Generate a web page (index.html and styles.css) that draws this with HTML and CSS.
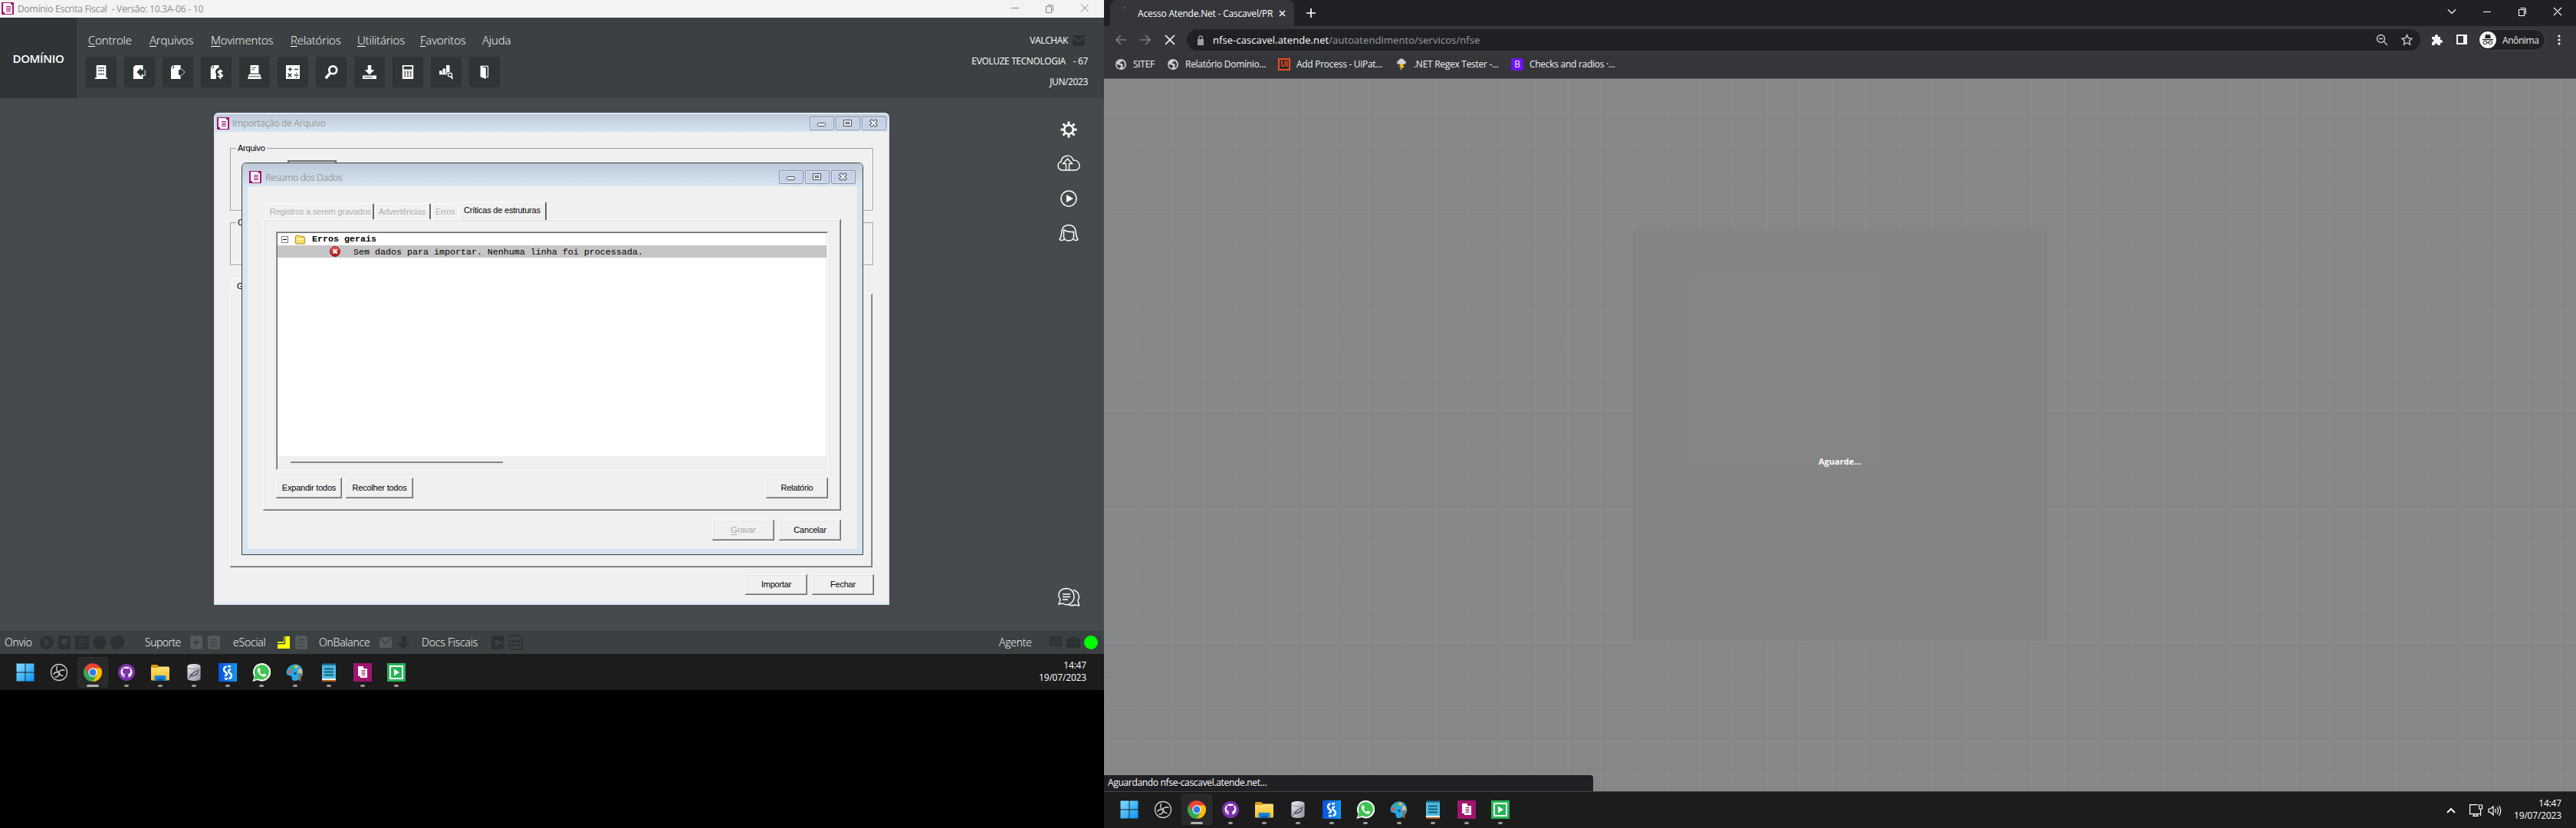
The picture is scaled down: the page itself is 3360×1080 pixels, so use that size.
FILE: index.html
```html
<!DOCTYPE html>
<html lang="pt-BR">
<head>
<meta charset="utf-8">
<title>Domínio Escrita Fiscal</title>
<link rel="stylesheet" href="styles.css">
</head>
<body>
<svg class="defs" width="0" height="0">
  <defs>
    <linearGradient id="gWin" x1="0" y1="0" x2="1" y2="1"><stop offset="0" stop-color="#84e0ff"/><stop offset="1" stop-color="#0a93f5"/></linearGradient>
    <linearGradient id="gFold" x1="0" y1="0" x2="0" y2="1"><stop offset="0" stop-color="#ffe07a"/><stop offset="1" stop-color="#fcbd1f"/></linearGradient>
    <linearGradient id="gDb" x1="0" y1="0" x2="1" y2="1"><stop offset="0" stop-color="#f0f1f6"/><stop offset=".6" stop-color="#b4b7c2"/><stop offset="1" stop-color="#8f92a0"/></linearGradient>
    <linearGradient id="gBlue" x1="0" y1="0" x2="1" y2="0"><stop offset="0" stop-color="#0a50dc"/><stop offset="1" stop-color="#1597ee"/></linearGradient>
    <linearGradient id="gErr" x1="0" y1="0" x2="0" y2="1"><stop offset="0" stop-color="#ef6a62"/><stop offset="1" stop-color="#a60a10"/></linearGradient>
  </defs>
  <symbol id="doc" viewBox="0 0 16 16"><path fill="#a0146e" d="M0 0h16v16H0z"/><path fill="#fff" d="M2 1h10v2h2v12H4v-2H2z"/><path stroke="#a0146e" d="M6 5.500h6M6 7.500h6M6 9.500h6M6 11.500h6"/></symbol>
  <symbol id="win" viewBox="0 0 24 24"><path fill="url(#gWin)" d="M.5.5h11v11H.5zM12.500.5h11v11h-11zM.5 12.500h11v11H.5zM12.500 12.500h11v11h-11z"/></symbol>
  <symbol id="obs" viewBox="0 0 24 24"><circle cx="12" cy="12" r="10.500" fill="#19191b" stroke="#c9c9c9" stroke-width="1.300"/><path fill="none" stroke="#c4c4c4" stroke-width="1.600" d="M9.500 4c-1.500 4 0 7 2.500 8M19.500 9.500c-4-1.500-7 0-7.500 2.500M6.500 18c4.500.5 6-2.500 5.500-6M12 12c1 3.500 3.500 4.500 5.500 4.500M12 12c-3-1-6 .5-7.500 2.500"/></symbol>
  <symbol id="chrome" viewBox="0 0 24 24"><path fill="#fbbc04" d="M22.400 6A12 12 0 0 1 12 24l3.500-9L12 6z"/><path fill="#34a853" d="M1.600 6A12 12 0 0 0 12 24l5-8.500L7 15z"/><path fill="#ea4335" d="M1.600 6A12 12 0 0 1 22.400 6.500H12l-5 8.500z"/><circle cx="12" cy="12" r="5.700" fill="#fff"/><circle cx="12" cy="12" r="4.500" fill="#2b7de9"/></symbol>
  <symbol id="hub" viewBox="0 0 24 24"><circle cx="12" cy="12" r="11" fill="#7d32ab"/><path fill="#fff" d="M12 4.500c-4.300 0-7.500 3.200-7.500 7.300 0 3.300 2 6 5 7v-2.300c-2 .3-2.500-.8-3-1.700l1.500.2c.5.8 1 .9 1.700.7.100-.6.300-.9.600-1.200-2.500-.4-3.500-1.700-3.500-3.700 0-1 .3-1.700.8-2.300-.2-.8-.1-1.600.2-2.200.9 0 1.600.4 2.200.9a8 8 0 0 1 4 0c.6-.5 1.300-.9 2.200-.9.300.6.400 1.400.2 2.200.5.600.8 1.300.8 2.300 0 2-1 3.300-3.500 3.700.5.500.8 1.100.8 2v2.300c3-1 5-3.700 5-7 0-4.100-3.200-7.300-7.500-7.300z"/></symbol>
  <symbol id="folder" viewBox="0 0 24 24"><path fill="#d99a12" d="M0 3.500Q0 2 1.500 2H8l2.500 2.500V8H0z"/><path fill="url(#gFold)" d="M0 6h9l2-1.500h11.500Q24 4.500 24 6v15.500q0 1-1 1H1q-1 0-1-1z"/><path fill="#1783d8" d="M4.500 23v-5.500q0-1.500 1.500-1.500h12q1.500 0 1.500 1.500V23z"/><path fill="#0b5fa8" d="M8 23v-3h8v3z"/></symbol>
  <symbol id="db" viewBox="0 0 24 24"><path fill="url(#gDb)" d="M3.500 4C3.500 0 20.500 0 20.500 4v16c0 4-17 4-17 0z"/><path fill="none" stroke="#8c8f9c" d="M3.500 5.500c1 3 16 3 17 0M3.500 13c1 3 16 3 17 0"/><path fill="none" stroke="#4b4d57" stroke-width="1.300" d="M5 20c3-5 7-9 13-11-1 5-5 8-10 8"/></symbol>
  <symbol id="dollar" viewBox="0 0 24 24"><path fill="url(#gBlue)" d="M0 0h24v24H0z"/><path fill="none" stroke="#fff" stroke-width="2.400" d="M10.500 4.500c-4 .5-4.500 5-1.500 7s2.500 4-1 5M13.500 20c4-.5 4.500-5 1.500-7s-2.500-4 1-5"/><path fill="#fff" d="M12 3h4v2.400h-4zM8 19h4v2.400H8z"/></symbol>
  <symbol id="zap" viewBox="0 0 24 24"><path fill="#fff" d="M12.500 0A11.700 11.700 0 0 0 2.500 17.500L.5 24l6.500-2A11.700 11.700 0 1 0 12.500 0z"/><circle cx="12.400" cy="11.700" r="9.700" fill="#3fc351"/><path fill="#3fc351" d="M3.500 16l-1.300 5.800 6-1.500z"/><path fill="#fff" d="M8.500 6c-3 2-1.500 6.500 2 9.500s7 3 7.800 0c0-.8-2.500-2-3.300-1.700l-1.300 1.300c-2-.7-3.500-2.200-4-3.800l1.100-1.500C10.700 8.500 9.900 6 8.500 6z"/></symbol>
  <symbol id="paint" viewBox="0 0 24 24"><path fill="#2aa7e8" d="M11 1.500C4 2.500-.5 9 1 14c1.200 3 4.500 1.500 6 3s-.5 5.500 4 6c7 .3 12-6.500 11-12.500S17 .7 11 1.500z"/><circle cx="7.500" cy="6.500" r="2.200" fill="#3fae49"/><circle cx="13.500" cy="4.800" r="2.200" fill="#f6b91c"/><circle cx="4.500" cy="11.500" r="2.200" fill="#e8543f"/><circle cx="12" cy="13.500" r="1.700" fill="#134a74"/><path fill="#e9b97a" d="M16 7.500h4.500v6H16z"/><path fill="#b0611c" d="M17 13h2.500v9q-1.200 3-2.500 0z"/></symbol>
  <symbol id="note" viewBox="0 0 24 24"><path fill="#54bde0" d="M3 2h18v19H3z"/><path fill="#f4f4f4" d="M3 20h18v2H3z"/><path fill="#b05a1e" d="M3 22h18v2H3z"/><path stroke="#0d5a80" stroke-width="1.800" d="M6 7.500h12M6 11.500h12M6 15.500h12"/><path stroke="#1c86b8" stroke-width="1.500" d="M5 0v4M8 0v4M11 0v4M14 0v4M17 0v4M20 0v4"/></symbol>
  <symbol id="dom" viewBox="0 0 24 24"><path fill="#a0146e" d="M0 0h24v24H0z"/><path fill="#fff" d="M6 4h7v3h5v12H9v-2H6z"/><path stroke="#a0146e" stroke-width="1" d="M10.500 9.500h5M10.500 11.500h5M10.500 13.500h5M10.500 15.500h5"/></symbol>
  <symbol id="play" viewBox="0 0 24 24"><path fill="#24b455" d="M0 0h24v24H0z"/><path fill="none" stroke="#fff" stroke-width="2" d="M4 4h16v16H4z"/><path fill="#fff" d="M9 7.500l7 4.500-7 4.500z"/></symbol>
  <symbol id="globe" viewBox="0 0 14 14"><circle cx="7" cy="7" r="7" fill="#c9cbce"/><path fill="#35363a" d="M1.500 7l3 .5 2.500 1v1.500l-1 1-.5 1.500C3 11.500 1.500 9.500 1.500 7zM7 1.500l2 .5-.5 1.500-2 .5-1 1.500 3 .5 1.500 2-1 2.500 2 .5c2.500-4 .5-8-3-9z"/></symbol>
  <symbol id="cmin" viewBox="0 0 32 18"><rect x="10.500" y="8.500" width="10" height="4" rx="1" fill="#f4f4f4" stroke="#4c5064"/></symbol>
  <symbol id="cmax" viewBox="0 0 32 18"><rect x="10.500" y="4.500" width="10" height="8" rx=".5" fill="#eee" stroke="#4c5064"/><rect x="13.500" y="7.500" width="4" height="2" fill="#c5d3e3" stroke="#4c5064"/></symbol>
  <symbol id="ccls" viewBox="0 0 32 18"><path stroke="#4c5064" stroke-width="4.400" d="M11.500 4.500l8 8M19.500 4.500l-8 8"/><path stroke="#f4f4f4" stroke-width="2.400" d="M12.200 5.200l6.600 6.600M18.800 5.200l-6.600 6.600"/></symbol>
</svg>

<main class="screens">
<section class="left">
  <header class="app-title">
    <svg width="16" height="16"><use href="#doc"/></svg>
    <span class="app-name">Domínio Escrita Fiscal&nbsp; - Versão: 10.3A-06 - 10</span>
    <svg class="wctl" width="102" height="16" fill="none" stroke="#858585"><path d="M1 7.500h10M46.500 5.500h7v8h-7zM48.500 3.500h5q2 0 2 2v6M92 2.500l10 10M102 2.500l-10 10"/></svg>
  </header>
  <header class="app-head">
    <div class="brand">DOMÍNIO</div>
    <div class="head-mid">
      <nav class="menu"><span><u>C</u>ontrole</span><span><u>A</u>rquivos</span><span><u>M</u>ovimentos</span><span><u>R</u>elatórios</span><span><u>U</u>tilitários</span><span><u>F</u>avoritos</span><span>Ajuda</span></nav>
      <div class="tools">
        <i><svg viewBox="0 0 20 20"><path fill="#fff" d="M3 0h14v18h2v2H1v-2h2z"/><path fill="#2f3437" d="M6 3h2v2H6zM9 3h2v2H9zM12 3h2v2h-2zM6 7h2v2H6zM9 7h2v2H9zM12 7h2v2h-2zM6 12h2v2H6zM9 12h2v2H9zM12 12h2v2h-2z"/></svg></i>
        <i><svg viewBox="0 0 20 20"><path fill="#fff" d="M1 3l3-3h11v20H1z"/><path fill="#2f3437" d="M6 10l6-6v3h6v6h-5v4z"/><path fill="none" stroke="#fff" d="M14 15h4V7M2 3h2V1"/></svg></i>
        <i><svg viewBox="0 0 20 20"><path fill="#fff" d="M0 3l3-3h11v6l-3 1v7l3 1v5H0z"/><path fill="none" stroke="#ddd" d="M15 5l5 5-5 5"/><path fill="none" stroke="#2f3437" d="M4 0v4H1"/></svg></i>
        <i><svg viewBox="0 0 20 20"><path fill="#fff" d="M2 3l3-3h9v4c-5 1-6 5-4 9v7H2z"/><path fill="none" stroke="#2f3437" d="M6 0v4H3"/><path fill="none" stroke="#fff" stroke-width="2" d="M19 9.500c-2-2-6-1.500-6 .8 0 2.700 6 2 6 4.700 0 2.300-4.500 2.800-6.500.5M16 6v14"/></svg></i>
        <i><svg viewBox="0 0 20 20"><path fill="#fff" d="M4 0h12v12H4zM2 13h16l2 7H0z"/><path stroke="#2f3437" d="M6 3.500h6M6 6.500h4M2 16.500h16"/></svg></i>
        <i><svg viewBox="0 0 20 20"><path fill="#fff" d="M0 0h20v20H0z"/><path stroke="#2f3437" stroke-width="1.600" d="M3 6h6M6 3v6M12 6h6M3 12l5 5M8 12l-5 5M12 14.500h6M14.500 11.500h1.500M14.500 17.500h1.500"/></svg></i>
        <i><svg viewBox="0 0 20 20"><circle cx="12.500" cy="7" r="5.500" fill="none" stroke="#fff" stroke-width="3"/><path stroke="#fff" stroke-width="4" d="M8 12l-6 7"/></svg></i>
        <i><svg viewBox="0 0 20 20"><path fill="#fff" d="M7.500 0h5v7H17l-7 7-7-7h4.500zM0 15h20v5H0z"/><path stroke="#2f3437" d="M2 17.500h12"/></svg></i>
        <i><svg viewBox="0 0 20 20"><path fill="#fff" d="M2 0h16v20H2z"/><path fill="#2f3437" d="M4 2h12v4H4zM5 9h2v2H5zM9 9h2v2H9zM13 9h2v2h-2zM5 12h2v2H5zM9 12h2v2H9zM13 12h2v2h-2zM5 15h2v2H5zM9 15h2v2H9zM13 15h2v2h-2z"/></svg></i>
        <i><svg viewBox="0 0 20 20"><path fill="#fff" d="M0 8h4v5H0zM5 5h4v8H5zM10 0h5v10h-3l-1 3h-1zM0 12h10v1.500H0z"/><circle cx="15.500" cy="14" r="2.800" fill="none" stroke="#fff" stroke-width="1.500"/><path stroke="#fff" stroke-width="2" d="M17 16l2.500 4"/></svg></i>
        <i><svg viewBox="0 0 20 20"><path fill="#fff" d="M4 2l8 2v16l-8-3z"/><path fill="none" stroke="#fff" stroke-width="1.200" d="M4 1.500h11V17h-3"/></svg></i>
      </div>
    </div>
    <div class="who">
      <div>VALCHAK<svg width="16" height="14"><path fill="#2a2f31" d="M0 0h16v14H0z"/><path fill="none" stroke="#444a4c" stroke-width="1.500" d="M0 2l8 6 8-6"/></svg></div>
      <div>EVOLUZE TECNOLOGIA<b>- 67</b></div>
      <div>JUN/2023</div>
    </div>
  </header>

  <div class="desk">
    <div class="side">
      <svg width="22" height="22" viewBox="-11 -11 22 22"><circle r="5.800" fill="none" stroke="#fff" stroke-width="2.600"/><path stroke="#fff" stroke-width="3" d="M0-7v-3.500M0 7v3.500M-7 0h-3.500M7 0h3.500M5-5l2.500-2.500M-5-5l-2.500-2.500M5 5l2.500 2.500M-5 5l-2.500 2.500"/></svg>
      <svg width="30" height="22" viewBox="0 0 30 22" fill="none" stroke="#fff" stroke-width="1.400"><path d="M11 20H7C-.5 19.500-.5 10 5 9 6 0 18-2 21 7c9-1 11 12 3 13h-8"/><path d="M11.500 20v-8.500H7.500l6-6.500 6 6.500h-4V20z"/></svg>
      <svg class="vid" width="22" height="22" viewBox="0 0 22 22"><circle cx="11" cy="11" r="10" fill="none" stroke="#fff" stroke-width="1.500"/><path fill="#fff" d="M8 6l9 5-9 5z"/></svg>
      <svg width="26" height="24" viewBox="0 0 26 24" fill="none" stroke="#fff" stroke-width="1.500"><path d="M7 20c-2 2-5 2-6 0 3-3 2-6 3-11C5-1 21-1 22 9c1 5 0 8 3 11-1 2-4 2-6 0"/><path d="M6.500 8v9c1 6.500 12 6.500 13 0v-6.500c-5 .5-9-.5-13-2.500z"/></svg>
      <svg class="chat" width="30" height="26" viewBox="0 0 30 26" fill="none" stroke="#fff" stroke-width="1.400"><path d="M4 16l-2 6 5-1c8 5 15-2 15-9S17 1.500 12 1.500C2 2 0 10 4 16zM21 3.500c7 2 9 9 6 14l1.500 6.500-6-1c-2 1-5 1-8-.5"/><path d="M7 9h10M7 12.500h10M7 16h7"/></svg>
    </div>

    <div class="dlg outer">
      <div class="dlg-title"><svg width="16" height="16"><use href="#doc"/></svg><span>Importação de Arquivo</span>
        <div class="btns"><b><svg><use href="#cmin"/></svg></b><b><svg><use href="#cmax"/></svg></b><b><svg><use href="#ccls"/></svg></b></div></div>
      <div class="outer-body">
        <fieldset class="fs1"><legend>Arquivo</legend><div class="combo"></div></fieldset>
        <fieldset class="fs2"><legend>Competência</legend></fieldset>
        <div class="gtab">Geral</div>
        <div class="gpanel"></div>
        <div class="foot"><span class="btn">Importar</span><span class="btn">Fechar</span></div>
      </div>
    </div>

    <div class="dlg inner">
      <div class="dlg-title"><svg width="16" height="16"><use href="#doc"/></svg><span>Resumo dos Dados</span>
        <div class="btns"><b><svg><use href="#cmin"/></svg></b><b><svg><use href="#cmax"/></svg></b><b><svg><use href="#ccls"/></svg></b></div></div>
      <div class="inner-body">
        <div class="tabs"><span class="t1">Registros a serem gravados</span><span class="t2">Advertências</span><span class="t3">Erros</span><span class="on">Críticas de estruturas</span></div>
        <div class="panel">
          <div class="tree">
            <div class="row"><i class="minus"></i><svg width="15" height="13" viewBox="0 0 15 13"><path fill="#f6dd6c" stroke="#b38a1c" d="M1.500 11.500v-9l1-1.500h4l1 1.500h5V4l1.500.5-1 7.500H2z"/><path fill="#fdf3a8" d="M3 5h10l-1 2H3z"/></svg><strong>Erros gerais</strong></div>
            <div class="row sel"><svg width="14" height="14" viewBox="0 0 14 14"><circle cx="7" cy="7" r="6.500" fill="url(#gErr)" stroke="#96161a"/><path stroke="#fff" stroke-width="2.200" d="M4.500 4.500l5 5M9.500 4.500l-5 5"/></svg><span>Sem dados para importar. Nenhuma linha foi processada.</span></div>
            <div class="hbar"><i></i></div>
          </div>
          <div class="acts"><span class="btn w86">Expandir todos</span><span class="btn w88">Recolher todos</span><span class="btn push">Relatório</span></div>
        </div>
        <div class="foot2"><span class="btn off"><u>G</u>ravar</span><span class="btn">Cancelar</span></div>
      </div>
    </div>
  </div>

  <footer class="status">
    <span class="s1">Onvio</span>
    <svg width="112" height="20" fill="#2b3032"><circle cx="9" cy="10" r="9"/><path fill="#3b4042" d="M6 5l8 5-8 5z"/><rect x="24" y="1" width="16" height="18" rx="3"/><path fill="#3b4042" d="M28 5h8v7h-2l-2 3-2-3h-2z"/><rect x="46" y="1" width="18" height="18"/><path stroke="#3b4042" d="M50 5.500h10M50 9.500h10M50 13.500h10"/><circle cx="78" cy="10" r="9"/><circle cx="101" cy="10" r="9"/></svg>
    <span class="s2">Suporte</span>
    <svg width="40" height="20" fill="#55595b"><rect x="0" y="1" width="16" height="18" rx="3"/><path stroke="#3b4042" stroke-width="2" d="M4 10h8M8 6v8"/><rect x="23" y="1" width="16" height="18" rx="3"/><path stroke="#3b4042" d="M26 5.500h9M26 8.500h9M26 11.500h9M26 14.500h9"/></svg>
    <span class="s3">eSocial</span>
    <svg width="41" height="20"><path fill="#ff0" d="M9 2h8v16H1V9h8z"/><path fill="none" stroke="#3b4042" stroke-width="1.300" d="M1 11.500h9.500V2"/><rect x="24" y="1" width="16" height="18" rx="3" fill="#55595b"/><path stroke="#3b4042" d="M28 6.500h8M28 10.500h8M28 14.500h8"/></svg>
    <span class="s4">OnBalance</span>
    <svg width="42" height="20"><path fill="#55595b" d="M0 3h16v14H0z"/><path fill="none" stroke="#3b4042" stroke-width="1.500" d="M0 4l8 7 8-7"/><path fill="#2b3032" d="M28 2h7v9h4l-8 8-8-8h5z"/></svg>
    <span class="s5">Docs Fiscais</span>
    <svg width="42" height="20"><rect y="1" width="16" height="18" rx="3" fill="#2b3032"/><path fill="#3b4042" d="M3 10l5-5v3h6v4H8v3z"/><path fill="none" stroke="#2b3032" stroke-width="1.300" d="M24 6V1h13l3 4v14H26l-2-2"/><path stroke="#2b3032" stroke-width="3" stroke-dasharray="3 1" d="M22 8.500h16M22 13.500h16"/></svg>
    <span class="s6">Agente</span>
    <svg width="64" height="20"><rect x="0" y="2" width="16" height="13" rx="3" fill="#2b3032"/><path fill="#2b3032" d="M11 14h4v4z"/><path fill="none" stroke="#3b4042" d="M3.500 5.500h9v7h-9z"/><circle cx="6" cy="9" r="1.300" fill="#3b4042"/><circle cx="10.500" cy="9" r="1.300" fill="#3b4042"/><path fill="#2b3032" d="M22 5h6V2.500h6V5h6v12H22z"/><path fill="#3b4042" d="M29.500 4h3v1h-3zM22 10.500h7.500v1H22zM32.500 10.500H40v1h-7.500z"/><circle cx="54" cy="10" r="9" fill="#0f0"/></svg>
  </footer>

  <div class="taskbar">
    <div class="apps">
      <i class="bare"><svg><use href="#win"/></svg></i><i class="bare"><svg><use href="#obs"/></svg></i><i class="act"><svg><use href="#chrome"/></svg></i><i><svg><use href="#hub"/></svg></i><i><svg><use href="#folder"/></svg></i><i><svg><use href="#db"/></svg></i><i><svg><use href="#dollar"/></svg></i><i><svg><use href="#zap"/></svg></i><i><svg><use href="#paint"/></svg></i><i><svg><use href="#note"/></svg></i><i><svg><use href="#dom"/></svg></i><i><svg><use href="#play"/></svg></i>
    </div>
    <div class="clock"><span>14:47</span><span>19/07/2023</span></div>
  </div>
</section>

<section class="right">
  <div class="strip">
    <div class="ctab"><i class="spin"></i><span>Acesso Atende.Net - Cascavel/PR</span><svg width="9" height="9"><path stroke="#fff" stroke-width="1.500" d="M1 1l7 7M8 1L1 8"/></svg></div>
    <svg class="plus" width="12" height="12"><path stroke="#fff" stroke-width="1.700" d="M6 0v12M0 6h12"/></svg>
    <svg class="wins" width="150" height="14" fill="none" stroke="#fff" stroke-width="1.100"><path d="M1 4.500l5 5 5-5M47 7.500h10M93.500 4.500h7v8h-7zM95.500 2.500h5q2 0 2 2v6M139 2l10 10M149 2l-10 10"/></svg>
  </div>
  <div class="bar">
    <svg class="nav" width="80" height="16" fill="none" stroke-width="1.700"><path stroke="#7d7f83" d="M15 8H2M8 2L2 8l6 6M33 8h13M40 2l6 6-6 6"/><path stroke="#f1f1f1" d="M66 2l12 12M78 2L66 14"/></svg>
    <div class="omni">
      <svg width="10" height="13"><path fill="#9aa0a6" d="M1 5h8v8H1z"/><path fill="none" stroke="#9aa0a6" stroke-width="1.400" d="M2.700 5V3q0-2 2.300-2t2.300 2v2"/></svg>
      <span class="url"><b>nfse-cascavel.atende.net</b>/autoatendimento/servicos/nfse</span>
      <svg class="oico" width="48" height="16" fill="none" stroke="#c4c6c9" stroke-width="1.400"><circle cx="6.500" cy="6.500" r="5"/><path d="M10 10l5 5M4 6.500h5"/><path d="M40.500 1.500l1.900 4.300 4.600.5-3.400 3.200.9 4.500-4-2.300-4 2.300.9-4.500L34 6.300l4.600-.5z"/></svg>
    </div>
    <svg class="ext" width="48" height="16" fill="#f1f3f4"><path d="M1 4h4c-1-4 5-4 4 0h3v4c4-1 4 5 0 4v3H8.500c0-3-4-3-4 0H1v-4c3 0 3-4 0-4z"/><path fill="none" stroke="#f1f3f4" stroke-width="2" d="M34 2h12v11H34z"/><path d="M42 2h5v12h-5z"/></svg>
    <div class="anon"><svg width="22" height="22"><circle cx="11" cy="11" r="11" fill="#f1f3f4"/><path fill="#202124" d="M7 9l1.200-5h1.600l1.200.6 1.200-.6h1.600L15 9zM4 10h14v1.200H4z"/><path fill="none" stroke="#202124" stroke-width="1.100" d="M9.500 14.500h3"/><circle cx="7.500" cy="14.500" r="2.200" fill="none" stroke="#202124"/><circle cx="14.500" cy="14.500" r="2.200" fill="none" stroke="#202124"/></svg><span>Anônima</span></div>
    <svg class="kebab" width="4" height="14" fill="#f1f3f4"><circle cx="2" cy="2" r="1.600"/><circle cx="2" cy="7" r="1.600"/><circle cx="2" cy="12" r="1.600"/></svg>
  </div>
  <div class="marks">
    <span class="m1"><svg width="14" height="14"><use href="#globe"/></svg>SITEF</span>
    <span class="m2"><svg width="14" height="14"><use href="#globe"/></svg>Relatório Domínio...</span>
    <span class="m3"><b class="ui">Ui</b>Add Process - UiPat...</span>
    <span class="m4"><svg width="14" height="16"><rect x="1" y="3" width="12" height="5" rx="2.500" fill="#b9bdc3"/><circle cx="7" cy="4" r="3.600" fill="#cfd3d8"/><path fill="#f9c31c" d="M6 7h4L8.500 10H11l-6 6 1.500-4.500H4z"/></svg>.NET Regex Tester -...</span>
    <span class="m5"><b class="bs">B</b>Checks and radios ·...</span>
  </div>
  <div class="page">
    <div class="load"><div class="shade"></div><span class="wait">Aguarde...</span></div>
    <div class="bubble">Aguardando nfse-cascavel.atende.net...</div>
  </div>
  <div class="taskbar tb2">
    <div class="apps">
      <i class="bare"><svg><use href="#win"/></svg></i><i class="bare"><svg><use href="#obs"/></svg></i><i class="act"><svg><use href="#chrome"/></svg></i><i><svg><use href="#hub"/></svg></i><i><svg><use href="#folder"/></svg></i><i><svg><use href="#db"/></svg></i><i><svg><use href="#dollar"/></svg></i><i><svg><use href="#zap"/></svg></i><i><svg><use href="#paint"/></svg></i><i><svg><use href="#note"/></svg></i><i><svg><use href="#dom"/></svg></i><i><svg><use href="#play"/></svg></i>
    </div>
    <svg class="tray" width="72" height="18" fill="none" stroke="#fff" stroke-width="1.200"><path stroke-width="1.800" d="M1 12l5-5 5 5"/><path d="M41 1.600H30.600v12H44M34 16.400h8M36 14v2M40 14v2M42.600 2h4v5h-4zM44.600 7v9M55 7h2.500L61 4v11l-3.500-3.500H55zM63.500 7q1.500 2.500 0 5M66 5q3 4.500 0 9M68.500 3q4.500 6.500 0 13"/></svg>
    <div class="clock"><span>14:47</span><span>19/07/2023</span></div>
  </div>
</section>
</main>
</body>
</html>
```
FILE: styles.css
```css
* { box-sizing: border-box; }
body { margin: 0; background: #000; font: 12px "Open Sans", "Noto Sans", sans-serif; }
i { font-style: normal; }
svg { display: block; flex: none; }
.defs { position: absolute; }
.screens { display: flex; width: 3360px; height: 1080px; overflow: hidden; white-space: nowrap; }
.left, .right { display: flex; flex-direction: column; flex: none; }
.left { width: 1440px; height: 900px; }
.right { width: 1920px; height: 1080px; }

/* application title and header */
.app-title { display: flex; align-items: center; height: 23px; padding: 0 20px 1px 2px; background: #f3f3f3; color: #8c8c8c; }
.app-name { margin-left: 5px; letter-spacing: -.21px; }
.wctl { margin-left: auto; }
.app-head { display: flex; height: 105px; background: #3b4042; color: #fff; }
.brand { display: flex; align-items: center; justify-content: center; width: 100px; background: #2f3437; font-size: 15px; font-weight: 600; letter-spacing: -.33px; }
.head-mid { padding: 19px 0 0 12px; }
.menu { display: grid; grid-template-columns: 80px 80px 104px 87px 82px 81px 40px; padding-left: 3px; height: 32px; font-size: 15px; font-weight: 300; line-height: 20px; letter-spacing: -.18px; }
.menu u, .off u { text-underline-offset: 2px; }
.tools { display: flex; gap: 10px; }
.tools i { display: flex; align-items: center; justify-content: center; width: 40px; height: 40px; background: #2f3437; }
.tools svg { width: 18px; height: 20px; }
.who { margin-left: auto; padding: 16px 21px 0 0; line-height: 27px; text-align: right; letter-spacing: -.38px; }
.who div { display: flex; justify-content: flex-end; align-items: center; }
.who svg { margin: 0 4px 0 6px; }
.who b { font-weight: 400; margin-left: 10px; }

/* desktop area */
.desk { position: relative; height: 695px; background: #464a4c; display: flex; justify-content: flex-end; }
.side { display: flex; flex-direction: column; align-items: center; width: 32px; margin-right: 30px; padding: 30px 0 31px; gap: 22px; }
.vid { margin-top: 2px; }
.chat { margin-top: auto; }
.dlg { position: absolute; background: #d7e4f2; color: #000; font: 11px "Liberation Sans", Arial, sans-serif; letter-spacing: -.22px; }
.outer { left: 279px; top: 19px; width: 881px; height: 642px; border: 2px solid #dfe8f3; border-bottom-width: 3px; border-radius: 6px 6px 0 0; }
.inner { left: 315px; top: 84px; width: 811px; height: 512px; border: 1px solid #3d4043; border-radius: 6px 6px 0 0; padding: 0 7px 7px; }
.dlg-title { display: flex; align-items: center; height: 23px; padding: 0 2px; background: linear-gradient(#bccad8, #d7e4f2); font: 12px "Open Sans", sans-serif; letter-spacing: -.32px; color: #9a9a9a; border-radius: 5px 5px 0 0; }
.dlg-title > span { margin-left: 4px; }
.inner .dlg-title { height: 30px; margin: 0 -7px; padding: 6px 9px 0; }
.inner .dlg-title > span { margin-left: 5px; letter-spacing: -.46px; }
.btns { display: flex; gap: 2px; margin-left: auto; }
.btns b { width: 32px; height: 18px; border: 1px solid #8592ab; border-radius: 2px; box-shadow: inset 0 0 0 1px #dbe5f2; background: #c5d2e3; }
.btns svg { width: 32px; height: 18px; margin: -1px; }
.outer-body { display: flex; flex-direction: column; height: 614px; padding: 15px 18px 0 19px; background: #f0f0f0; }
fieldset { margin: 0 1px 0 0; padding: 0 7px; border: 1px solid #a0a0a0; box-shadow: 1px 1px #fff; min-width: 0; }
legend { padding: 0 2px; height: 12px; line-height: 12px; }
.fs1 { height: 88px; }
.fs2 { height: 62px; margin-top: 9px; }
.combo { width: 64px; height: 20px; margin: 10px 0 0 67px; border: 2px solid #696969; background: #fff; }
.gtab { width: 100px; height: 20px; margin: 17px 0 0 2px; padding: 3px 0 0 6px; border: 1px solid #fff; border-bottom: 0; border-radius: 2px 2px 0 0; }
.gpanel, .panel, .btn { box-shadow: inset -1px -1px #696969, inset 1px 1px #fff, inset -2px -2px #a0a0a0, inset 2px 2px #e3e3e3; }
.gpanel { height: 357px; margin-right: 2px; }
.foot, .foot2 { display: flex; justify-content: flex-end; gap: 6px; }
.foot { margin-top: 9px; }
.foot2 { margin-top: 12px; }
.btn { display: flex; align-items: center; justify-content: center; width: 81px; height: 27px; padding-bottom: 2px; background: #f0f0f0; }
.off { color: #a0a0a0; text-shadow: 1px 1px #fff; }
.inner-body { height: 473px; padding: 21px 21px 0 20px; background: #f0f0f0; }
.tabs { display: flex; align-items: flex-end; height: 22px; padding-left: 3px; color: #a8a8a8; }
.tabs span { height: 21px; padding: 4px 0 0 5px; border-top: 1px solid #fff; border-left: 1px solid #fff; border-right: 2px solid #696969; border-radius: 3px 2px 0 0; text-shadow: 1px 1px #fff; }
.tabs .t1 { width: 142px; }
.tabs .t2 { width: 73px; margin-left: 1px; padding-left: 4px; }
.tabs .t3 { width: 35px; margin-left: 1px; padding-left: 4px; border-right: 0; }
.tabs .on { width: 115px; height: 24px; padding: 4px 0 0 6px; margin-bottom: -1px; background: #f0f0f0; color: #000; text-shadow: none; }
.panel { height: 380px; padding: 16px 17px; }
.tree { display: flex; flex-direction: column; height: 311px; padding: 2px; background: #fff; box-shadow: inset 1px 1px #a0a0a0, inset -1px -1px #fff, inset 2px 2px #696969, inset -2px -2px #e3e3e3; font: 11.667px "Liberation Mono", "Courier New", monospace; letter-spacing: 0; }
.row { display: flex; align-items: center; height: 16px; flex: none; }
.minus { width: 9px; height: 9px; margin: 0 8px 0 5px; border: 1px solid #808080; background: linear-gradient(#000, #000) center / 5px 1px no-repeat; }
.row strong { margin: 0 0 0 8px; }
.sel { background: #c6c6c6; padding-left: 68px; }
.sel span { margin: 1px 0 0 17px; }
.hbar { margin-top: auto; height: 16px; padding: 7px 0 0 17px; background: #f0f0f0; }
.hbar i { display: block; width: 277px; height: 2px; background: #858585; }
.acts { display: flex; margin-top: 10px; }
.w86 { width: 86px; margin-right: 5px; }
.w88 { width: 88px; }
.push { margin-left: auto; }

/* status bar */
.status { display: flex; align-items: center; height: 30px; padding-left: 6px; background: #3b4042; color: #fff; font-size: 14px; font-weight: 300; letter-spacing: -.2px; }
.status span { flex: none; margin-top: -2px; }
.s1 { width: 46px; }
.s2 { width: 59px; margin-left: 25px; letter-spacing: -.5px; }
.s3 { width: 57px; margin-left: 16px; }
.s4 { width: 79px; margin-left: 14px; letter-spacing: -.2px; }
.s5 { width: 91px; margin-left: 13px; }
.s6 { width: 66px; margin-left: 620px; }

/* taskbars */
.taskbar { display: flex; align-items: center; height: 47px; padding: 0 23px 0 13px; background: #1c1c1c; color: #fff; flex: none; }
.apps { display: flex; gap: 4px; margin-right: auto; }
.apps i { display: flex; flex-direction: column; align-items: center; width: 40px; height: 40px; padding-top: 8px; border-radius: 4px; }
.apps svg { width: 24px; height: 24px; }
.apps i::after { content: ""; width: 6px; height: 3px; margin-top: 4px; border-radius: 2px; background: #9a9a9a; }
.apps .bare::after { display: none; }
.apps .act { background: #292929; box-shadow: inset 0 0 0 1px #303030; }
.apps .act::after { width: 16px; background: #b2b2ae; }
.clock { display: flex; flex-direction: column; align-items: flex-end; margin-top: -1px; line-height: 16px; letter-spacing: -.17px; }
.tb2 { height: 48px; padding-right: 19px; border-top: 1px solid #444; padding-bottom: 1px; }
.tray { margin-right: 16px; margin-top: 1px; }

/* browser */
.strip { display: flex; align-items: center; height: 34px; padding: 0 19px 0 8px; background: #202124; color: #fff; flex: none; }
.ctab { display: flex; align-items: center; width: 240px; height: 34px; padding-left: 17px; background: #35363a; border-radius: 8px 8px 0 0; letter-spacing: -.2px; }
.spin { width: 4px; height: 2px; margin: -14px 15px 0 0; background: #3b5378; border-radius: 1px; }
.ctab svg { margin-left: 8px; }
.plus { margin-left: 16px; }
.wins { margin: -5px -1px 0 auto; }
.bar { display: flex; align-items: center; height: 36px; padding: 0 20px 0 14px; background: #35363a; flex: none; }
.omni { display: flex; align-items: center; width: 1609px; height: 28px; margin-left: 14px; padding: 0 10px 0 13px; border-radius: 14px; background: #202124; }
.url { margin: -1px auto 0 11px; font-size: 13px; color: #9aa0a6; letter-spacing: .08px; }
.url b { font-weight: 400; color: #fff; }
.ext { margin-left: 14px; }
.anon { display: flex; align-items: center; width: 89px; height: 28px; margin-left: 12px; padding-left: 2px; border: 1px solid #46474b; border-radius: 14px; background: #202124; color: #e8eaed; }
.anon span { margin-left: 8px; letter-spacing: -.42px; }
.kebab { margin-left: auto; }
.marks { display: flex; align-items: center; height: 33px; padding: 0 0 5px 15px; background: #35363a; border-bottom: 1px solid #5b5c5e; color: #f1f3f4; letter-spacing: -.28px; flex: none; }
.marks span { display: flex; align-items: center; gap: 9px; flex: none; }
.m1 { width: 68px; }
.m2 { width: 144px; }
.m3 { width: 154px; }
.m4 { width: 150px; }
.marks b { width: 16px; height: 16px; line-height: 15px; text-align: center; }
.marks .m3, .marks .m5 { gap: 8px; }
.ui { background: #2b2b2b; color: #f04c1c; border: 2px solid #f04c1c; font: 700 10px "Liberation Sans", sans-serif; }
.marks .ui { line-height: 12px; }
.bs { background: #7012f5; border-radius: 3px; font-weight: 400; }
.page { position: relative; display: flex; justify-content: center; align-items: flex-start; height: 929px; padding-top: 196.5px; overflow: hidden;
  background-color: #868788;
  background-image: linear-gradient(90deg, #8c8c8c 1px, transparent 1px), linear-gradient(#8c8c8c 1px, transparent 1px);
  background-size: 43.2px 43.2px;
  background-position: 43.3px 0, 0 0; }
.load { position: relative; width: 540px; height: 535px; background: #848484; }
.shade { width: 253px; height: 256px; margin: 56px 0 0 73px; background: #858585; }
.wait { position: absolute; left: 242px; top: 294px; font-size: 11px; font-weight: 700; line-height: 16px; color: #fff; }
.bubble { position: absolute; left: 0; bottom: 0; width: 638px; height: 21px; padding-left: 5px; line-height: 20px; background: #202124; border-radius: 0 4px 0 0; color: #fff; letter-spacing: -.32px; }
```
